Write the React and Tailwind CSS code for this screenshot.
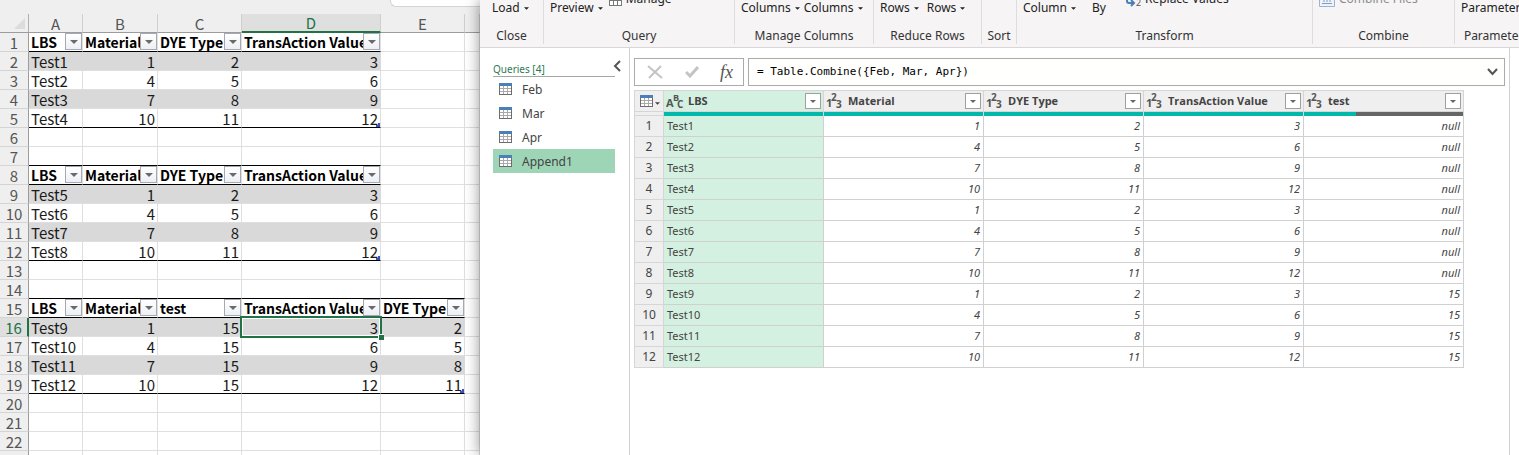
import React, { useState } from 'react'
import clsx from 'clsx'

const SHEET_COLUMNS = ['A', 'B', 'C', 'D', 'E', '']

const SHEET_TABLES = [
  {
    start: 1,
    header: ['LBS', 'Material', 'DYE Type', 'TransAction Value'],
    rows: [
      ['Test1', 1, 2, 3],
      ['Test2', 4, 5, 6],
      ['Test3', 7, 8, 9],
      ['Test4', 10, 11, 12],
    ],
  },
  {
    start: 8,
    header: ['LBS', 'Material', 'DYE Type', 'TransAction Value'],
    rows: [
      ['Test5', 1, 2, 3],
      ['Test6', 4, 5, 6],
      ['Test7', 7, 8, 9],
      ['Test8', 10, 11, 12],
    ],
  },
  {
    start: 15,
    header: ['LBS', 'Material', 'test', 'TransAction Value', 'DYE Type'],
    rows: [
      ['Test9', 1, 15, 3, 2],
      ['Test10', 4, 15, 6, 5],
      ['Test11', 7, 15, 9, 8],
      ['Test12', 10, 15, 12, 11],
    ],
  },
]

const QUERIES = ['Feb', 'Mar', 'Apr', 'Append1']

const RESULT_COLUMNS = ['LBS', 'Material', 'DYE Type', 'TransAction Value', 'test']

const RESULT_ROWS = Array.from({ length: 12 }, (_, i) => {
  const first = (i % 4) * 3 + 1
  return [`Test${i + 1}`, first, first + 1, first + 2, i < 8 ? 'null' : 15]
})

// Finds what a sheet cell holds and which part of its table it belongs to
function getCell(row, col) {
  for (const table of SHEET_TABLES) {
    const end = table.start + table.rows.length
    if (col >= table.header.length || row < table.start - 1 || row > end) continue
    if (row === table.start - 1) return { above: true }
    if (row === table.start) return { header: true, value: table.header[col] }
    return {
      value: table.rows[row - table.start - 1][col],
      banded: (row - table.start) % 2 === 1,
      last: row === end,
      corner: row === end && col === table.header.length - 1,
    }
  }
  return {}
}

function Caret({ className }) {
  return (
    <svg viewBox="0 0 8 4" className={clsx('shrink-0', className)} aria-hidden="true">
      <path d="M0 0h8L4 4z" fill="currentColor" />
    </svg>
  )
}

function TableIcon({ className }) {
  return (
    <svg viewBox="0 0 13 12" className={clsx('h-3 w-[13px] shrink-0', className)} shapeRendering="crispEdges" aria-hidden="true">
      <rect width="13" height="12" fill="#6d6d6d" />
      <path
        d="M1 3h3v2H1zM5 3h3v2H5zM9 3h3v2H9zM1 6h3v2H1zM5 6h3v2H5zM9 6h3v2H9zM1 9h3v2H1zM5 9h3v2H5zM9 9h3v2H9z"
        fill="#fff"
      />
      <path d="M4 3h1v8H4zM8 3h1v8H8zM1 5h11v1H1zM1 8h11v1H1z" fill="#a9a9a9" />
      <rect width="13" height="3" fill="#4a7fb8" />
    </svg>
  )
}

function SheetCell({ row, col }) {
  const cell = getCell(row, col)
  const selected = row === 16 && col === 3
  return (
    <td
      className={clsx(
        'relative h-[19px] border-r border-b p-0 pt-px leading-[17px] whitespace-nowrap',
        cell.banded ? 'border-r-[#d9d9d9] bg-[#d9d9d9]' : 'border-r-[#dfdfdf] bg-white',
        cell.above || cell.header || cell.last ? 'border-b-black' : 'border-b-[#dfdfdf]',
        cell.header && 'text-[14px] font-bold text-black',
        typeof cell.value === 'number' ? 'pr-0.5 text-right' : 'pl-0.5'
      )}
    >
      {cell.value}
      {cell.header && (
        <button
          type="button"
          aria-label={`Filter ${cell.value}`}
          className="absolute top-0 right-0 flex size-[17px] items-center justify-center border border-[#a5a9b5] bg-linear-to-b from-white to-[#eceff4] text-[#6a6a6a]"
        >
          <Caret className="h-1 w-2" />
        </button>
      )}
      {cell.corner && (
        <svg viewBox="0 0 4 4" className="absolute right-0 bottom-0 size-1" shapeRendering="crispEdges" aria-hidden="true">
          <path d="M2 0h2v4H0V2h2z" fill="#3f51b5" />
        </svg>
      )}
      {selected && (
        <div className="absolute -inset-x-0.5 -inset-y-0.5 z-10 border-2 border-[#217346] outline-1 -outline-offset-3 outline-white">
          <span className="absolute -right-1 -bottom-1 size-1.5 border-t border-l border-white bg-[#217346]" />
        </div>
      )}
    </td>
  )
}

function Spreadsheet() {
  return (
    <section className="w-[480px] shrink-0 overflow-hidden bg-[#efefef]">
      <div className="flex h-3.5 justify-end">
        <div className="h-[7px] w-[90px] rounded-bl-md border-b border-l border-[#d4d4d4] bg-white" />
      </div>
      <table className="w-full table-fixed border-separate border-spacing-0 font-['Noto_Sans_CJK_SC','Noto_Sans',sans-serif] text-[15px] text-[#1a1a1a]">
        <colgroup>
          <col className="w-[29px]" />
          <col className="w-[54px]" />
          <col className="w-[75px]" />
          <col className="w-[84px]" />
          <col className="w-[139px]" />
          <col className="w-[84px]" />
          <col />
        </colgroup>
        <thead>
          <tr className="text-[#555]">
            <td className="h-[19px] border-r border-b border-r-[#b0b0b0] border-b-[#9c9c9c] p-0 pr-[3px]">
              <svg viewBox="0 0 11 11" className="ml-auto size-[11px]" aria-hidden="true">
                <path d="M11 0v11H0z" fill="#dcdcdc" />
              </svg>
            </td>
            {SHEET_COLUMNS.map((name, i) => (
              <th
                key={i}
                scope="col"
                className={clsx(
                  'h-[19px] border-r border-r-[#cfcfcf] p-0 pt-px font-normal',
                  name === 'D'
                    ? 'border-b-2 border-b-[#217346] bg-[#dfdfdf] leading-4 text-[#217346]'
                    : 'border-b border-b-[#9c9c9c] leading-[17px]'
                )}
              >
                {name}
              </th>
            ))}
          </tr>
        </thead>
        <tbody>
          {Array.from({ length: 23 }, (_, i) => i + 1).map((row) => (
            <tr key={row}>
              <th
                scope="row"
                className={clsx(
                  'h-[19px] border-b border-b-[#d4d4d4] p-0 pt-px text-center leading-[17px] font-normal',
                  row === 16
                    ? 'border-r-2 border-r-[#217346] bg-[#dfdfdf] text-[#217346]'
                    : 'border-r border-r-[#9c9c9c] text-[#555]'
                )}
              >
                {row < 23 && row}
              </th>
              {SHEET_COLUMNS.map((_, col) => (
                <SheetCell key={col} row={row} col={col} />
              ))}
            </tr>
          ))}
        </tbody>
      </table>
    </section>
  )
}

function RibbonGroup({ label, className, children }) {
  return (
    <div className={clsx('h-11 shrink-0 border-r border-[#dedcdd]', className)}>
      <div className="flex h-7 items-start pl-1.5">{children}</div>
      <div className="h-4 text-center leading-4 whitespace-nowrap text-[#333]">{label}</div>
    </div>
  )
}

function RibbonButton({ caret, className, children }) {
  return (
    <button type="button" className={clsx('flex h-4 shrink-0 items-center gap-1 leading-4 whitespace-nowrap', className)}>
      {children}
      {caret && <Caret className="h-[3px] w-[5px]" />}
    </button>
  )
}

function Ribbon() {
  return (
    <header className="flex h-12 shrink-0 overflow-hidden border-b border-[#d8d6d7] bg-[#f6f4f5] text-[12px] text-[#222]">
      <RibbonGroup label="Close" className="w-16">
        <RibbonButton caret className="ml-1.5">Load</RibbonButton>
      </RibbonGroup>
      <RibbonGroup label="Query" className="w-[191px]">
        <RibbonButton caret>Preview</RibbonButton>
        <RibbonButton className="-mt-[9px] ml-1.5">
          <svg viewBox="0 0 13 14" className="h-3.5 w-[13px]" shapeRendering="crispEdges" aria-hidden="true">
            <rect width="13" height="14" fill="#777" />
            <path d="M1 1h3v3H1zM5 1h3v3H5zM9 1h3v3H9zM1 5h3v3H1zM5 5h3v3H5zM9 5h3v3H9zM1 9h3v4H1zM5 9h3v4H5zM9 9h3v4H9z" fill="#fff" />
          </svg>
          Manage
        </RibbonButton>
      </RibbonGroup>
      <RibbonGroup label="Manage Columns" className="w-[139px]">
        <RibbonButton caret>Columns</RibbonButton>
        <RibbonButton caret className="ml-1">Columns</RibbonButton>
      </RibbonGroup>
      <RibbonGroup label="Reduce Rows" className="w-[108px]">
        <RibbonButton caret>Rows</RibbonButton>
        <RibbonButton caret className="ml-2">Rows</RibbonButton>
      </RibbonGroup>
      <RibbonGroup label="Sort" className="w-[35px]" />
      <RibbonGroup label="Transform" className="w-[296px]">
        <RibbonButton caret>Column</RibbonButton>
        <RibbonButton className="ml-4">By</RibbonButton>
        <RibbonButton className="-mt-[9px] ml-5">
          <svg viewBox="0 0 15 16" className="h-4 w-[15px]" aria-hidden="true">
            <path d="M1 6v4q0 2 2 2h4M5 9l3 3-3 3" fill="none" stroke="#4a7fb8" strokeWidth="2" />
            <text x="10" y="15" fontSize="9" fill="#555">2</text>
          </svg>
          Replace Values
        </RibbonButton>
      </RibbonGroup>
      <RibbonGroup label="Combine" className="w-[142px]">
        <RibbonButton className="-mt-[9px] text-[#8d8d8d]">
          <svg viewBox="0 0 16 16" className="size-4" aria-hidden="true">
            <path d="M.5.5h15v15H.5z" fill="#eef3fa" stroke="#9db1d0" />
            <path d="M3 12.500h10M5 8v3M8 8v3M11 8v3" stroke="#7f9cc6" />
          </svg>
          Combine Files
        </RibbonButton>
      </RibbonGroup>
      <RibbonGroup label="Parameters" className="w-[84px]">
        <RibbonButton caret>Parameters</RibbonButton>
      </RibbonGroup>
    </header>
  )
}

function QueriesPane({ active, onSelect }) {
  return (
    <nav className="w-[150px] shrink-0 border-r border-[#d0d0d0] pt-3 pr-2 pl-[13px]">
      <div className="relative mr-1.5 h-[17px] border-b border-[#a6a6a6] text-[10px] leading-[18px] text-[#2f7a55]">
        Queries [4]
        <button type="button" aria-label="Collapse queries" className="absolute top-0 -right-1.5 text-[#555]">
          <svg viewBox="0 0 8 12" className="h-3 w-2" fill="none" stroke="currentColor" strokeWidth="2" aria-hidden="true">
            <path d="M7 1L2 6l5 5" />
          </svg>
        </button>
      </div>
      <ul className="mr-1.5">
        {QUERIES.map((name) => (
          <li key={name}>
            <button
              type="button"
              onClick={() => onSelect(name)}
              className={clsx(
                'flex h-6 w-full items-center gap-2.5 pl-1.5 text-[12px] text-[#444]',
                active === name && 'bg-[#9fd5b7]'
              )}
            >
              <TableIcon />
              <span className="pt-0.5">{name}</span>
            </button>
          </li>
        ))}
      </ul>
    </nav>
  )
}

function FormulaBar() {
  const [formula, setFormula] = useState('= Table.Combine({Feb, Mar, Apr})')
  return (
    <div className="flex h-7 gap-1">
      <div className="flex w-[110px] shrink-0 items-center justify-between border border-[#ababab] pr-2.5 pl-3">
        <button type="button" aria-label="Cancel">
          <svg viewBox="0 0 16 14" className="h-3.5 w-4" fill="none" stroke="#c4c4c4" strokeWidth="2" aria-hidden="true">
            <path d="M1 1l14 12M14 1L2 13" />
          </svg>
        </button>
        <button type="button" aria-label="Accept">
          <svg viewBox="0 0 14 12" className="h-3 w-3.5" fill="none" stroke="#c4c4c4" strokeWidth="3" aria-hidden="true">
            <path d="M1 6l4 4 8-9" />
          </svg>
        </button>
        <button type="button" aria-label="Insert step" className="font-['Liberation_Serif',serif] text-[18px] leading-5 text-[#555] italic">
          fx
        </button>
      </div>
      <div className="flex min-w-0 flex-1 items-center border border-[#ababab] bg-[#fffffe] pr-1.5 pl-2">
        <input
          aria-label="Formula"
          value={formula}
          onChange={(e) => setFormula(e.target.value)}
          className="min-w-0 flex-1 font-['DejaVu_Sans_Mono',monospace] text-[11px] text-black outline-none"
        />
        <button type="button" aria-label="Expand formula">
          <svg viewBox="0 0 11 8" className="h-2 w-[11px]" fill="none" stroke="#555" strokeWidth="2" aria-hidden="true">
            <path d="M1 1l4.500 5L10 1" />
          </svg>
        </button>
      </div>
    </div>
  )
}

// Small "ABC" or "123" mark that tells a column's data type
function TypeMark({ text }) {
  return (
    <svg
      viewBox="0 0 18 18"
      className="size-[18px] shrink-0 font-['Open_Sans',sans-serif] font-bold"
      fill="#555"
      aria-hidden="true"
    >
      <text x="0" y="15" fontSize="11">{text ? 'A' : '1'}</text>
      <text x={text ? 7 : 5} y="9" fontSize={text ? 9 : 10}>{text ? 'B' : '2'}</text>
      <text x={text ? 11 : 10} y="16" fontSize="10">{text ? 'C' : '3'}</text>
    </svg>
  )
}

function ResultTable() {
  return (
    <table className="mt-1 w-[830px] table-fixed border-separate border-spacing-0 border-t border-l border-[#d6d6d6] text-[11px] text-[#444]">
      <colgroup>
        <col className="w-[29px]" />
        <col className="w-40" />
        <col className="w-40" />
        <col className="w-40" />
        <col className="w-40" />
        <col className="w-40" />
      </colgroup>
      <thead>
        <tr>
          <td className="h-[21px] border-r border-b border-[#d6d6d6] bg-[#efefef] p-0">
            <button type="button" aria-label="Table options" className="flex items-center gap-0.5 pl-[5px]">
              <TableIcon />
              <Caret className="mt-1 h-[3px] w-[5px]" />
            </button>
          </td>
          {RESULT_COLUMNS.map((name, i) => (
            <th
              key={name}
              scope="col"
              className={clsx(
                'h-[21px] border-r border-b border-[#d6d6d6] p-0',
                i === 0 ? 'bg-[#d4f0e0]' : 'bg-[#efefef]'
              )}
            >
              <div className="flex h-5 items-center gap-1 px-0.5">
                <TypeMark text={i === 0} />
                <span className="flex-1 text-left font-['Open_Sans',sans-serif] font-bold whitespace-nowrap">{name}</span>
                <button
                  type="button"
                  aria-label={`Filter ${name}`}
                  className="flex size-4 items-center justify-center border border-[#a0a0a0] bg-white text-[#666]"
                >
                  <Caret className="h-[3px] w-1.5" />
                </button>
              </div>
            </th>
          ))}
        </tr>
        {/* Column quality bar */}
        <tr>
          <td className="h-1 border-r border-b border-[#d6d6d6] bg-[#efefef] p-0" />
          {RESULT_COLUMNS.map((name, i) => (
            <td key={name} className="h-1 border-r border-[#d6d6d6] p-0">
              <div className="flex h-1 bg-[#666]">
                <div className="bg-[#01b8aa]" style={{ width: i === 4 ? '33%' : '100%' }} />
              </div>
            </td>
          ))}
        </tr>
      </thead>
      <tbody>
        {RESULT_ROWS.map((row, i) => (
          <tr key={row[0]}>
            <th scope="row" className="h-[21px] border-r border-b border-[#d6d6d6] bg-[#efefef] p-0 text-center text-[12px] leading-5 font-normal">
              {i + 1}
            </th>
            {row.map((value, col) => (
              <td
                key={col}
                className={clsx(
                  'h-[21px] border-r border-b border-[#d0d0d0] p-0 leading-5',
                  col === 0 ? 'bg-[#d4f0e0] pl-[3px]' : 'bg-white pr-[3px] text-right italic'
                )}
              >
                {value}
              </td>
            ))}
          </tr>
        ))}
      </tbody>
    </table>
  )
}

export default function App() {
  const [active, setActive] = useState('Append1')

  return (
    <div className="flex h-screen overflow-hidden bg-white">
      <Spreadsheet />
      <main className="z-10 flex min-w-0 flex-1 flex-col bg-white font-['Noto_Sans','Open_Sans',sans-serif] shadow-[0_0_14px_rgba(0,0,0,0.45)]">
        <Ribbon />
        <div className="flex min-h-0 flex-1">
          <QueriesPane active={active} onSelect={setActive} />
          <div className="min-w-0 flex-1 overflow-hidden border-r border-[#d0d0d0] px-1 pt-2.5">
            <FormulaBar />
            <ResultTable />
          </div>
          <div className="w-[9px] shrink-0" />
        </div>
      </main>
    </div>
  )
}
